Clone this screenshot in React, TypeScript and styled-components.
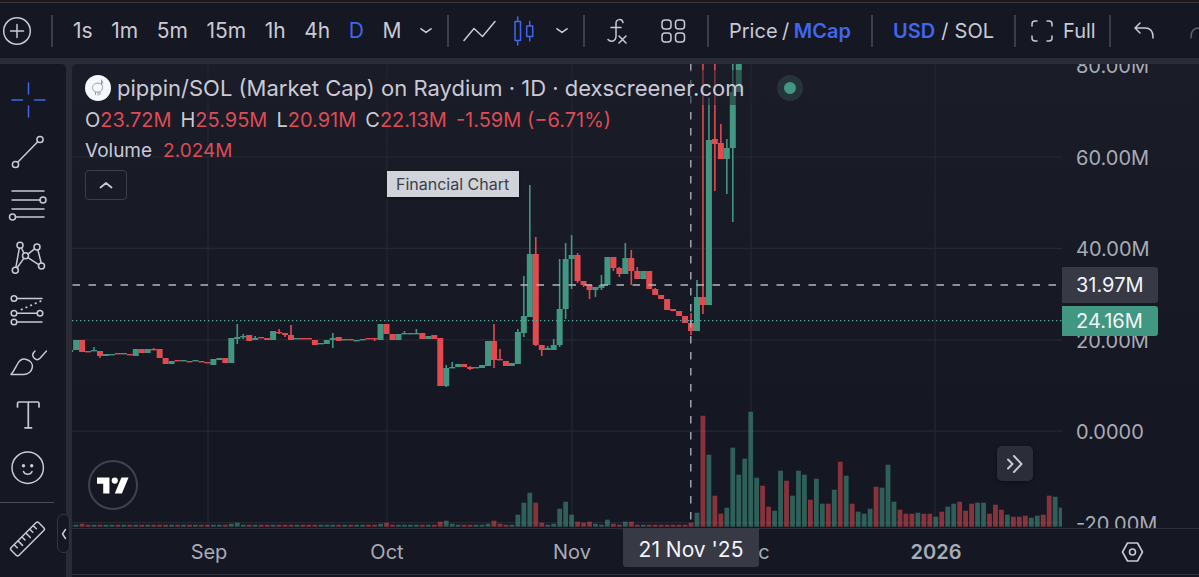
import React from 'react';
import styled, { createGlobalStyle, css } from 'styled-components';

const color = {
  panel: '#151722',
  plotTop: '#1a1c27',
  frame: '#2a2b36',
  line: '#3b3d48',
  grid: '#262833',
  text: '#c9cad6',
  axis: '#a9abb7',
  blue: '#4166ee',
  up: '#429782',
  down: '#e24a50',
  tag: '#373944',
};

const GlobalStyle = createGlobalStyle`
  *, *::before, *::after { box-sizing: border-box; }
  body {
    margin: 0;
    background: #1b191f;
    color: ${color.text};
    font-family: Inter, "Liberation Sans", sans-serif;
    font-size: 20px;
  }
  svg { display: block; flex: none; }
`;

/* ---------- frame ---------- */

const Page = styled.div`
  display: flex;
  flex-direction: column;
  min-height: 100vh;
  padding-top: 2px;
  overflow: hidden;
`;

const TopBar = styled.header`
  display: flex;
  align-items: center;
  height: 56px;
  flex: none;
  border-top: 1px solid #3a363b;
  background: ${color.panel};
  overflow: hidden;
`;

const Workspace = styled.div`
  flex: 1;
  display: grid;
  grid-template-columns: 66px minmax(0, 1fr);
  gap: 6px;
  padding-top: 6px;
  background: ${color.frame};
`;

/* ---------- top bar ---------- */

const plainButton = css`
  margin: 0;
  padding: 0;
  border: 0;
  background: none;
  color: inherit;
  font: inherit;
  line-height: 24px;
  cursor: pointer;
`;

const BarButton = styled.button<{ $active?: boolean; $bold?: boolean }>`
  ${plainButton}
  display: flex;
  align-items: center;
  gap: 10px;
  white-space: pre;
  color: ${(p) => (p.$active ? color.blue : 'inherit')};
  font-weight: ${(p) => (p.$bold ? 600 : 400)};
`;

const IntervalButton = styled(BarButton)`
  font-size: 21px;
`;

const BarGroup = styled.div<{ $width?: number; $pad: string }>`
  display: flex;
  align-items: center;
  justify-content: space-between;
  flex: none;
  width: ${(p) => (p.$width ? `${p.$width}px` : 'auto')};
  height: 32px;
  padding: ${(p) => p.$pad};
  border-right: ${(p) => (p.$width ? `2px solid ${color.line}` : 'none')};
`;

const History = styled(BarGroup)`
  gap: 36px;
`;

/* ---------- drawing tools ---------- */

const ToolRail = styled.nav`
  position: relative;
  display: flex;
  flex-direction: column;
  padding-top: 10px;
  background: ${color.panel};
  border-radius: 0 5px 0 0;
`;

const ToolList = styled.div`
  display: flex;
  flex-direction: column;
  height: 420px;
`;

const ToolButton = styled.button<{ $active?: boolean }>`
  ${plainButton}
  flex: 1;
  display: flex;
  align-items: center;
  width: 56px;
  justify-content: center;
  color: ${(p) => (p.$active ? color.blue : color.text)};
`;

const RailRule = styled.hr`
  width: 54px;
  height: 1px;
  margin: 8px 0 10px;
  border: 0;
  background: #4a4c57;
`;

const RulerSlot = styled.div`
  display: flex;
  flex-direction: column;
  height: 52px;
`;

const RailHandle = styled.button`
  ${plainButton}
  position: absolute;
  right: -4px;
  bottom: 24px;
  width: 13px;
  height: 39px;
  display: flex;
  align-items: center;
  justify-content: center;
  border: 1px solid #32343f;
  border-radius: 6px;
  background: ${color.panel};
`;

/* ---------- chart ---------- */

const ChartPanel = styled.main`
  display: grid;
  grid-template-columns: minmax(0, 1fr) 137px;
  grid-template-rows: minmax(320px, 1fr) 46px 3px;
  background: linear-gradient(${color.plotTop}, ${color.panel} 70%);
  border-radius: 5px 0 0 0;
`;

const Plot = styled.section`
  position: relative;
  display: grid;
  overflow: hidden;
  & > * { grid-area: 1 / 1; }
`;

const PlotSvg = styled.svg`
  width: 100%;
  height: 0;
  min-height: 100%;
`;

const Legend = styled.div`
  position: relative;
  display: flex;
  flex-direction: column;
  align-items: flex-start;
  align-self: start;
  padding: 6px 0 0 13px;
`;

const TitleRow = styled.div`
  display: flex;
  align-items: center;
  height: 35px;
`;

const TitleLabel = styled.h1`
  display: flex;
  align-items: center;
  gap: 6px;
  margin: 0;
  padding-right: 12px;
  height: 35px;
  font-size: 22px;
  font-weight: 400;
  white-space: nowrap;
  background: rgba(26, 28, 39, 0.5);
`;

const MarketStatus = styled.span`
  width: 26px;
  height: 26px;
  margin-left: 21px;
  border: 7px solid #24343a;
  border-radius: 50%;
  background: ${color.up};
`;

const Values = styled.div`
  display: flex;
  gap: 9px;
  height: 30px;
  line-height: 30px;
  white-space: nowrap;
`;

const Value = styled.span`
  color: #dd4c55;
`;

const VolumeRow = styled(Values)`
  gap: 11px;
  height: 31px;
  font-size: 19px;
  line-height: 31px;
`;

const CollapseButton = styled.button`
  ${plainButton}
  display: flex;
  align-items: center;
  justify-content: center;
  width: 42px;
  height: 30px;
  margin-top: 4px;
  border: 1px solid ${color.line};
  border-radius: 4px;
`;

const Tooltip = styled.div`
  position: absolute;
  left: 315px;
  top: 107px;
  padding: 0 10px 0 9px;
  background: #d0d3d9;
  color: #3b3e48;
  font-size: 16px;
  line-height: 26px;
  box-shadow: 0 1px 3px rgba(0, 0, 0, 0.4);
`;

const LogoLink = styled.a`
  position: absolute;
  left: 16px;
  bottom: 18px;
  display: flex;
  align-items: center;
  justify-content: center;
  width: 50px;
  height: 50px;
  border: 2px solid #40424d;
  border-radius: 50%;
  color: #fff;
`;

const LatestButton = styled.button`
  ${plainButton}
  position: absolute;
  right: 29px;
  bottom: 47px;
  display: flex;
  align-items: center;
  justify-content: center;
  width: 36px;
  height: 35px;
  border-radius: 5px;
  background: #2b2d38;
  box-shadow: 0 1px 4px rgba(0, 0, 0, 0.4);
`;

const PriceAxis = styled.aside`
  position: relative;
  height: 0;
  min-height: 100%;
  overflow: hidden;
  color: ${color.axis};
`;

const PriceScale = styled.ol`
  display: flex;
  flex-direction: column;
  margin: -43px 0 0;
  padding: 0 0 0 14px;
  height: 549px;
  list-style: none;
  line-height: 90px;
`;

const PriceLabel = styled.li`
  flex: 1 1 0;
`;

const PriceTag = styled.div<{ $top: number; $height: number; $bg: string }>`
  position: absolute;
  left: 0;
  top: ${(p) => p.$top}px;
  width: 96px;
  padding-left: 14px;
  line-height: ${(p) => p.$height}px;
  border-radius: 0 3px 3px 0;
  background: ${(p) => p.$bg};
  color: #f3f4f8;
`;

const TimeAxis = styled.div`
  position: relative;
  display: grid;
  grid-template-columns: 47fr 180fr 176fr 194fr 164fr 206fr 23fr;
  border-top: 1px solid #2c2e39;
  color: ${color.axis};
  line-height: 47px;
  text-align: center;
`;

const Month = styled.span<{ $first?: boolean; $bold?: boolean }>`
  grid-column-start: ${(p) => (p.$first ? 2 : 'auto')};
  font-weight: ${(p) => (p.$bold ? 600 : 400)};
`;

const TimeTag = styled.div`
  position: absolute;
  left: 551px;
  top: -1px;
  width: 136px;
  height: 39px;
  line-height: 44px;
  font-size: 21px;
  border-radius: 0 0 3px 3px;
  background: ${color.tag};
  color: #f3f4f8;
  white-space: nowrap;
`;

const AxisCorner = styled.div`
  display: flex;
  align-items: center;
  justify-content: center;
  padding-left: 3px;
  border-top: 1px solid #2c2e39;
`;

const CornerButton = styled.button`
  ${plainButton}
`;

const BottomEdge = styled.div`
  grid-column: 1 / -1;
  border-top: 1px solid #2f313c;
  background: ${color.panel};
`;

/* ---------- series data ---------- */

type Candle = ['u' | 'd', number, number, number?, number?];

const FIRST_CANDLE = -84;

// direction, body top, body bottom, wick top, wick bottom; one entry per day
const candles: Candle[] = [
  ['u', 350, 352], ['u', 340, 350], ['d', 340, 352], ['d', 351, 352], ['u', 350, 351, 347, 351], ['d', 351, 356, 351, 358],
  ['u', 354, 356], ['u', 354, 355], ['d', 353, 354], ['u', 353, 354], ['d', 354, 355], ['u', 349, 356],
  ['d', 349, 353], ['u', 349, 353], ['d', 349, 350, 348, 350], ['d', 349, 358], ['d', 358, 364], ['u', 361, 364],
  ['d', 360, 361], ['u', 360, 361], ['d', 361, 362], ['u', 360, 361], ['d', 361, 362], ['d', 362, 363],
  ['u', 359, 365], ['u', 358, 360], ['d', 358, 363], ['u', 338, 363], ['u', 337, 339, 324, 344], ['u', 336, 337, 334, 339],
  ['d', 335, 341], ['u', 338, 340, 336, 340], ['d', 337, 338], ['d', 338, 340], ['u', 331, 340], ['d', 332, 333, 329, 334],
  ['d', 333, 335, 333, 337], ['d', 335, 340, 325, 340], ['u', 338, 339], ['d', 338, 339], ['d', 338, 339], ['d', 340, 345],
  ['u', 343, 344], ['u', 340, 344], ['u', 338, 340, 333, 348], ['d', 337, 341], ['u', 339, 340], ['d', 339, 340],
  ['u', 340, 341], ['u', 339, 340], ['d', 338, 339], ['d', 338, 339, 338, 341], ['u', 324, 340], ['d', 324, 334],
  ['d', 334, 340], ['u', 334, 340], ['u', 333, 334, 331, 334], ['u', 333, 334], ['u', 333, 334, 329, 334], ['d', 333, 339],
  ['u', 336, 339], ['d', 335, 339], ['d', 338, 386], ['u', 368, 386, 365, 387], ['u', 367, 368, 362, 368], ['u', 364, 367],
  ['d', 364, 367], ['d', 367, 369, 366, 370], ['u', 367, 368], ['u', 365, 368], ['u', 341, 366], ['d', 341, 360, 324, 368],
  ['d', 359, 360, 349, 360], ['d', 361, 366], ['u', 363, 366], ['u', 332, 364, 329, 364], ['u', 316, 333, 276, 337], ['u', 254, 317, 185, 317],
  ['d', 254, 345, 237, 346], ['d', 345, 350, 345, 356], ['u', 348, 350, 346, 350], ['u', 345, 350, 339, 350], ['u', 309, 345, 259, 347], ['u', 259, 309, 243, 319],
  ['u', 255, 259, 235, 289], ['d', 255, 281, 253, 283], ['d', 281, 285, 281, 287], ['d', 285, 290, 285, 299], ['u', 287, 290, 287, 297], ['u', 285, 288, 275, 290],
  ['u', 257, 285], ['d', 257, 268, 257, 271], ['d', 268, 274, 267, 277], ['u', 258, 274, 243, 274], ['d', 258, 271, 250, 285], ['d', 271, 279, 267, 279],
  ['u', 271, 279], ['d', 271, 289], ['d', 289, 295, 288, 295], ['d', 295, 299], ['d', 299, 310], ['d', 309, 311],
  ['d', 311, 316], ['d', 316, 323], ['d', 323, 331, 313, 335], ['u', 297, 331, 280, 331], ['d', 297, 305, 60, 314], ['u', 140, 305, 98, 305],
  ['d', 139, 144, 60, 191], ['d', 143, 159, 124, 159], ['u', 148, 159, 139, 194], ['u', 92, 148, 60, 222], ['u', 60, 92],
];

// quiet early sessions, coloured like their candles
const earlyHeights: Record<number, number> = { [-83]: 2, [-82]: 3, [-57]: 3, [-56]: 4, [-32]: 3, [-31]: 4 };

const FIRST_VOLUME = -22;

const volumes =
  'd5 u6 u3 u2 d2 d2 u2 u2 u3 d6 d3 d2 u2 u12 u24 u34 d24 d4 u2 u3 u18 u25 u12 d5 d4 d5 u3 u2 u7 d3 d2 u5 d5 d2 u2 d2 d2 d2 d2 d2 d2 ' +
  'd2 d4 u14 d111 u72 d31 d13 u19 u79 u52 u68 u115 u49 d41 d20 u16 u56 d46 u31 u56 u52 d27 u48 u23 d23 u37 d65 u51 d23 u15 ' +
  'u13 u18 d40 u39 u62 u25 d17 d13 d13 u14 d13 d13 u10 d15 u20 u23 d25 d16 d23 u24 u24 d13 d22 d17 u12 d10 d10 d11 u9 u11 d12 d31 u30 u19';

const dayX = (day: number) => 571.6 + 5.97 * day;

const bars = [
  ...candles.slice(0, FIRST_VOLUME - FIRST_CANDLE).map((c, i) => {
    const day = FIRST_CANDLE + i;
    return { day, dir: c[0], height: earlyHeights[day] ?? 2 };
  }),
  ...volumes.split(' ').map((v, i) => ({
    day: FIRST_VOLUME + i,
    dir: v[0] as 'u' | 'd',
    height: Number(v.slice(1)),
  })),
];

const fillOf = (dir: 'u' | 'd') => (dir === 'u' ? color.up : color.down);

function PriceChart() {
  return (
    <PlotSvg viewBox="72 64 990 464" preserveAspectRatio="xMinYMin slice" role="img" aria-label="Price and volume chart">
      <g stroke={color.grid} strokeWidth={1.2}>
        {[157, 248.4, 339.8, 431.2, 522.6].map((y) => (
          <line key={y} x1={72} x2={1062} y1={y} y2={y} />
        ))}
        {[208, 387, 572, 751, 935].map((x) => (
          <line key={x} x1={x} x2={x} y1={64} y2={528} />
        ))}
      </g>
      <g opacity={0.56}>
        {bars.map((b) => (
          <rect key={b.day} x={dayX(b.day) - 2.4} width={4.8} y={526.7 - b.height} height={b.height} fill={fillOf(b.dir)} />
        ))}
      </g>
      {candles.map(([dir, top, bottom, high, low], i) => {
        const x = dayX(FIRST_CANDLE + i);
        return (
          <g key={i} fill={fillOf(dir)}>
            {high !== undefined && low !== undefined && <rect x={x - 0.8} width={1.6} y={high} height={low - high} />}
            <rect x={x - 3} width={6} y={top} height={Math.max(bottom - top, 1.4)} />
          </g>
        );
      })}
      <line x1={72} x2={1062} y1={320.7} y2={320.7} stroke="#58ad9d" strokeWidth={1.2} strokeDasharray="1.3 2.7" />
      <g stroke="#b4b6bf" strokeWidth={1.3} strokeDasharray="7.5 8.5">
        <line x1={72.5} x2={1062} y1={285} y2={285} />
        <line x1={690.8} x2={690.8} y1={64} y2={528} />
      </g>
    </PlotSvg>
  );
}

/* ---------- icons ---------- */

type IconProps = { w: number; h: number; sw?: number; children: React.ReactNode };

const Icon = ({ w, h, sw = 1.5, children }: IconProps) => (
  <svg width={w} height={h} viewBox={`0 0 ${w} ${h}`} fill="none" stroke="currentColor" strokeWidth={sw} strokeLinecap="round" strokeLinejoin="round" aria-hidden="true">
    {children}
  </svg>
);

const ChevronDown = () => (
  <Icon w={12} h={8} sw={1.6}><path d="M1 1.8 6 5.4l5-3.6" /></Icon>
);

const tools = [
  {
    label: 'Cross', active: true,
    icon: <Icon w={36} h={36}><path d="M18.5 1v11M18.5 24v11M2 18h10.5M24.5 18H35" /></Icon>,
  },
  {
    label: 'Trend line',
    icon: <Icon w={36} h={36}><circle cx="30" cy="4.500" r="3.100" /><circle cx="5.500" cy="29.500" r="3.100" /><path d="M8 27 27.500 7" /></Icon>,
  },
  {
    label: 'Fib retracement',
    icon: <Icon w={40} h={34}><path d="M4 3h32M4 12h28M4 21h32M7.500 29h28.500" /><circle cx="35" cy="12" r="3" /><circle cx="4.500" cy="29" r="3" /></Icon>,
  },
  {
    label: 'Patterns',
    icon: (
      <Icon w={36} h={36}>
        <path d="M9.3 8.3 5.9 27.2M11.5 8l2.4 5M18 14.2l6.6-5.3M27.9 10l3.3 13M7.2 27.8l6.6-9.4M17.9 17.6l10.8 7" />
        <circle cx="10" cy="5.3" r="3" /><circle cx="5.3" cy="30.3" r="3" /><circle cx="15.5" cy="15.8" r="3" /><circle cx="27" cy="7" r="3" /><circle cx="31.5" cy="26" r="3" />
      </Icon>
    ),
  },
  {
    label: 'Forecast',
    icon: (
      <Icon w={36} h={34}>
        <path d="M7 5.5h25M7 20.3h20M7 29h25" />
        <path d="M11.5 16.5 31 8" strokeDasharray="0.5 4.6" strokeWidth={1.8} />
        <circle cx="4" cy="5.5" r="2.8" /><circle cx="4" cy="20.3" r="2.8" /><circle cx="30" cy="20.3" r="2.8" /><circle cx="4" cy="29" r="2.8" />
      </Icon>
    ),
  },
  {
    label: 'Brush',
    icon: (
      <Icon w={38} h={28}>
        <path d="M2 25.500C5 22 6.500 18.500 8.500 15 11 10.500 14.500 9.500 17.500 10.500 21.500 11.700 24 15 23.300 18.500 22.500 22.500 19 25.500 14.500 25.500Z" />
        <path d="M26 2c-3 2.500-2.700 5.500-.7 7.300 1.700 1.700 4 1.700 5.700 0L37.500 2" />
      </Icon>
    ),
  },
  {
    label: 'Text',
    icon: <Icon w={24} h={28} sw={1.7}><path d="M1.500 6V2.500Q1.500 1 3 1h18.500Q23 1 23 2.500V6M12.300 1v25.500M9 26.800h6.600" /></Icon>,
  },
  {
    label: 'Emoji',
    icon: (
      <Icon w={36} h={36}>
        <circle cx="17.700" cy="17.700" r="15.700" /><path d="M13.500 21.500c1.500 3.700 7 3.700 8.500 0" />
        <g fill="currentColor" stroke="none"><circle cx="13.500" cy="15.700" r="1.700" /><circle cx="21.700" cy="15.700" r="1.700" /></g>
      </Icon>
    ),
  },
];

const RulerIcon = () => (
  <Icon w={38} h={38}>
    <g transform="rotate(-45 18.500 19)">
      <rect x="-1" y="13.500" width="39" height="11" rx="2" />
      <path d="M5 14v4M10.500 14v6M16 14v4M21.500 14v6M27 14v4M32 14v4" />
    </g>
  </Icon>
);

const TokenAvatar = () => (
  <svg width="26" height="26" viewBox="0 0 26 26" fill="none" stroke="#8f939b" strokeWidth="0.9" aria-hidden="true">
    <circle cx="13" cy="13" r="13" fill="#f5f9fd" stroke="none" />
    <path d="M9 9.500c2-2 6-1.500 8 0 1 2.500.6 5.500-1.500 7-2 1-5 .8-6.500-.5-2-2-1.700-5 0-6.500ZM16.500 10V4.500M16.500 5.500l1.500 3M10.500 17v3M13 17.500v3M15 17v3" />
  </svg>
);

/* ---------- page ---------- */

const intervals = ['1s', '1m', '5m', '15m', '1h', '4h', 'D', 'M'];

const ohlc = [
  ['O', '23.72M'],
  ['H', '25.95M'],
  ['L', '20.91M'],
  ['C', '22.13M'],
];

export default function App() {
  return (
    <>
      <GlobalStyle />
      <Page>
        <TopBar>
          <BarGroup $width={53} $pad="0 0 0 2px">
            <BarButton aria-label="Add symbol">
              <Icon w={30} h={30}><circle cx="15" cy="15" r="13.300" /><path d="M8.500 15h13M15 8.500v13" /></Icon>
            </BarButton>
          </BarGroup>
          <BarGroup $width={396} $pad="0 15px 0 20px">
            {intervals.map((label) => (
              <IntervalButton key={label} $active={label === 'D'}>{label}</IntervalButton>
            ))}
            <BarButton aria-label="More intervals"><ChevronDown /></BarButton>
          </BarGroup>
          <BarGroup $width={136} $pad="0 15px 0 14px">
            <BarButton aria-label="Line chart">
              <Icon w={33} h={22}><path d="M1 20.500 11 8.500l8.500 8L32 1.500" /></Icon>
            </BarButton>
            <BarButton aria-label="Candles" $active>
              <Icon w={24} h={32}>
                <path d="M1 6.500h5.500v19H1zM3.700 2v4.500M3.700 25.500V30M12.700 11h6v10.500h-6zM15.700 6.500V11M15.700 21.500V26" />
              </Icon>
            </BarButton>
            <BarButton aria-label="More chart types"><ChevronDown /></BarButton>
          </BarGroup>
          <BarGroup $width={124} $pad="0 21px 0 22px">
            <BarButton aria-label="Indicators">
              <Icon w={20} h={28}>
                <path d="M16 5.500C15 1.500 9 1.500 9 6.500V19c0 5.500-5.500 6.500-8 3.500M4 10.500h10M12 19l7 7M19 19l-7 7" />
              </Icon>
            </BarButton>
            <BarButton aria-label="Layouts">
              <Icon w={25} h={24}>
                <rect x="1" y="1" width="9" height="9" rx="3" /><rect x="14.500" y="1" width="9" height="9" rx="3" />
                <rect x="1" y="14" width="9" height="9" rx="3" /><rect x="14.500" y="14" width="9" height="9" rx="3" />
              </Icon>
            </BarButton>
          </BarGroup>
          <BarGroup $width={164} $pad="0 20px">
            <BarButton>Price</BarButton>
            <span>/</span>
            <BarButton $active $bold>MCap</BarButton>
          </BarGroup>
          <BarGroup $width={143} $pad="0 20px">
            <BarButton $active $bold>USD</BarButton>
            <span>/</span>
            <BarButton>SOL</BarButton>
          </BarGroup>
          <BarGroup $width={95} $pad="0 13px 0 15px">
            <BarButton>
              <Icon w={22} h={22}>
                <path d="M1 6V4q0-3 3-3h2M16 1h2q3 0 3 3v2M21 16v2q0 3-3 3h-2M6 21H4q-3 0-3-3v-2" />
              </Icon>
              Full
            </BarButton>
          </BarGroup>
          <History $pad="0 0 0 23px">
            <BarButton aria-label="Undo">
              <Icon w={20} h={18}><path d="M6 1 1 6l5 5M1.500 6H11q8 0 8 9v1" /></Icon>
            </BarButton>
            <BarButton aria-label="Redo">
              <Icon w={20} h={18}><g opacity="0.4"><path d="m14 1 5 5-5 5M18.500 6H9Q1 6 1 15v1" /></g></Icon>
            </BarButton>
          </History>
        </TopBar>

        <Workspace>
          <ToolRail aria-label="Drawing tools">
            <ToolList>
              {tools.map((tool) => (
                <ToolButton key={tool.label} $active={tool.active} aria-label={tool.label}>{tool.icon}</ToolButton>
              ))}
            </ToolList>
            <RailRule />
            <RulerSlot>
              <ToolButton aria-label="Measure"><RulerIcon /></ToolButton>
            </RulerSlot>
            <RailHandle aria-label="Hide tools">
              <Icon w={6} h={12}><path d="M4.500 1.500 1.500 6l3 4.500" /></Icon>
            </RailHandle>
          </ToolRail>

          <ChartPanel>
            <Plot>
              <PriceChart />
              <Legend>
                <TitleRow>
                  <TitleLabel><TokenAvatar />pippin/SOL (Market Cap) on Raydium · 1D · dexscreener.com</TitleLabel>
                  <MarketStatus title="Market open" />
                </TitleRow>
                <Values>
                  {ohlc.map(([name, value]) => (
                    <span key={name}>{name}<Value>{value}</Value></span>
                  ))}
                  <Value>-1.59M (−6.71%)</Value>
                </Values>
                <VolumeRow>
                  <span>Volume</span>
                  <Value>2.024M</Value>
                </VolumeRow>
                <CollapseButton aria-label="Collapse legend">
                  <Icon w={14} h={8} sw={1.8}><path d="M1.500 6.500 7 2l5.500 4.500" /></Icon>
                </CollapseButton>
              </Legend>
              <Tooltip role="tooltip">Financial Chart</Tooltip>
              <LogoLink href="#tradingview" aria-label="TradingView">
                <svg width="32" height="25" viewBox="0 0 36 28" fill="currentColor" aria-hidden="true">
                  <path d="M14 23H7V12H0V5h14v18zM28 23h-8l7.500-18h8L28 23z" /><circle cx="20" cy="8.500" r="3.500" />
                </svg>
              </LogoLink>
              <LatestButton aria-label="Scroll to latest bar">
                <Icon w={18} h={18} sw={1.9}><path d="m2 4.500 4.500 4.500L2 13.500M8 1l7.500 8L8 17" /></Icon>
              </LatestButton>
            </Plot>

            <PriceAxis>
              <PriceScale>
                {['80.00M', '60.00M', '40.00M', '20.00M', '0.0000', '-20.00M'].map((p) => (
                  <PriceLabel key={p}>{p}</PriceLabel>
                ))}
              </PriceScale>
              <PriceTag $top={203} $height={36} $bg={color.tag}>31.97M</PriceTag>
              <PriceTag $top={242} $height={30} $bg={color.up}>24.16M</PriceTag>
            </PriceAxis>

            <TimeAxis>
              <Month $first>Sep</Month>
              <Month>Oct</Month>
              <Month>Nov</Month>
              <Month>Dec</Month>
              <Month $bold>2026</Month>
              <TimeTag>21 Nov '25</TimeTag>
            </TimeAxis>

            <AxisCorner>
              <CornerButton aria-label="Chart settings">
                <Icon w={23} h={22} sw={1.6}><path d="M6.500 2h10l5 9-5 9h-10l-5-9z" /><circle cx="11.500" cy="11" r="3" /></Icon>
              </CornerButton>
            </AxisCorner>
            <BottomEdge />
          </ChartPanel>
        </Workspace>
      </Page>
    </>
  );
}
